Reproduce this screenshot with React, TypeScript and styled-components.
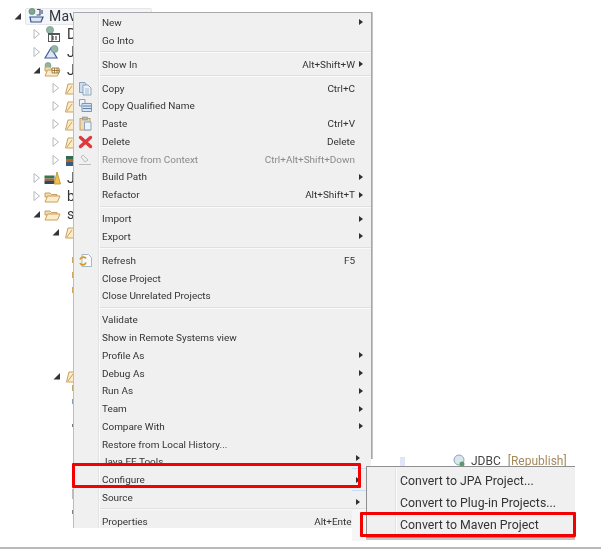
import React from "react";
import styled, { createGlobalStyle } from "styled-components";

const Global = createGlobalStyle`
  html, body { margin: 0; padding: 0; background: #fff; }
  body { font-family: Roboto, "Liberation Sans", sans-serif; }
`;

const Page = styled.div`
  position: relative;
  width: 601px;
  height: 549px;
  overflow: hidden;
  background: #fff;
  box-sizing: border-box;
  border-bottom: 2px solid #b9b9b9;
  filter: blur(0.3px);
`;

/* ---------- Tree behind the menu ---------- */
const Tree = styled.div`
  display: flex;
  flex-direction: column;
  padding-top: 7px;
`;
const TreeRow = styled.div<{ $level: number }>`
  display: flex;
  align-items: center;
  height: 18px;
  padding-left: ${(p) => 13 + p.$level * 19}px;
  color: #333;
`;
const RootLabel = styled.div`
  display: flex;
  align-items: center;
  height: 17px;
  width: 127px;
  margin-left: 2px;
  box-sizing: border-box;
  background: #f2f6fc;
  border: 1px solid #e6e6e6;
  border-radius: 2px;
`;
const TreeText = styled.span<{ $root?: boolean }>`
  margin-left: ${(p) => (p.$root ? 4 : 6)}px;
  font-size: 14px;
  letter-spacing: 0.3px;
  white-space: nowrap;
`;
const Slivers = styled.div`
  display: flex;
  flex-direction: column;
  align-items: flex-start;
  padding-left: 71.5px;
`;
const Sliver = styled.div<{ $gap: number; $h: number; $c: string }>`
  width: 2px;
  height: ${(p) => p.$h}px;
  margin-top: ${(p) => p.$gap}px;
  background: ${(p) => p.$c};
`;
const SliverIcon = styled.div`
  display: flex;
  align-items: center;
  margin-left: -20px;
  height: 14px;
`;

const Caret = ({ open }: { open: boolean }) => (
  <svg width="10" height="12" viewBox="0 0 10 12" style={{ flex: "none" }}>
    {open ? (
      <path d="M8 3 V9.5 H1.5 Z" fill="#333" />
    ) : (
      <path d="M2 1.5 L7.5 6 L2 10.5 Z" fill="#fff" stroke="#b4b8bc" strokeWidth="1" />
    )}
  </svg>
);

const Folder = () => (
  <g>
    <path d="M1 5 H6 L7.5 6.5 H13 V9 H1 Z" fill="#f4dcae" stroke="#c9a060" strokeWidth="1" />
    <path d="M1 14 L3.5 8 H16 L13.5 14 Z" fill="#fbeccb" stroke="#c9a060" strokeWidth="1" />
  </g>
);

const TreeIcon = ({ kind }: { kind: string }) => {
  return (
    <svg width="17" height="16" viewBox="0 0 17 16" style={{ flex: "none", marginLeft: 2 }}>
      {kind === "maven" && (
        <g>
          <circle cx="4" cy="3.5" r="3" fill="#7fa88f" stroke="#5b7a6a" strokeWidth="0.7" />
          <path d="M2 9 H15 L13 14 H3 Z" fill="#dce6f3" stroke="#33508c" strokeWidth="1.2" />
          <path d="M9 1.5 H12 V7 H8.5 M14 2 V6" fill="none" stroke="#3f4f7f" strokeWidth="1.2" />
        </g>
      )}
      {kind === "version" && (
        <g>
          <circle cx="6" cy="4" r="3.6" fill="#8fb7a4" stroke="#6b917f" strokeWidth="0.6" />
          <rect x="4.5" y="7.5" width="11" height="8" fill="#fff" stroke="#555" strokeWidth="1" />
          <rect x="4.5" y="7.5" width="11" height="1.5" fill="#555" />
          <path d="M7 10 H9 V14 M7 12 H9 M7 14 H9 M12 10 V14" fill="none" stroke="#222" strokeWidth="1" />
        </g>
      )}
      {kind === "jax" && (
        <g>
          <path d="M1 14 L7 4 L13 14 Z" fill="#dfe7f6" stroke="#3f5aa0" strokeWidth="1.2" />
          <circle cx="10.5" cy="5" r="3.6" fill="#93b7a6" stroke="#6b917f" strokeWidth="0.6" />
        </g>
      )}
      {kind === "openpkg" && (
        <g>
          <circle cx="4" cy="3.5" r="3" fill="#8fb7a4" stroke="#6b917f" strokeWidth="0.6" />
          <Folder />
          <path d="M8 6 H15 V11 H8 Z M10.5 6 V11 M13 6 V11 M8 8.5 H15" fill="#fff3d8" stroke="#8a6a30" strokeWidth="0.8" />
        </g>
      )}
      {kind === "pkgclip" && (
        <g>
          <path d="M2.5 14 L5 4 H14 V14 Z" fill="#fbeccb" stroke="#c9a060" strokeWidth="1" />
          <path d="M4 13 L9 6" stroke="#d2a050" strokeWidth="1" />
        </g>
      )}
      {kind === "libclip" && (
        <g>
          <rect x="3" y="4" width="10" height="3" fill="#2f6b4f" />
          <rect x="3" y="7" width="10" height="3" fill="#b06a30" />
          <rect x="3" y="10" width="10" height="4" fill="#3c5a7a" />
        </g>
      )}
      {kind === "books" && (
        <g>
          <rect x="0.5" y="5.5" width="10" height="3" fill="#2f7a55" />
          <rect x="0.5" y="8.5" width="10" height="2.5" fill="#a9663c" />
          <rect x="0.5" y="11" width="10" height="3" fill="#2c4a68" />
          <path d="M10 14 L13 2 L16.5 14 Z" fill="#f3c04d" stroke="#bd8a2b" strokeWidth="0.8" />
        </g>
      )}
      {kind === "folder" && <Folder />}
    </svg>
  );
};

/* ---------- Context menu ---------- */
const Menu = styled.div`
  position: absolute;
  left: 73px;
  top: 12px;
  width: 298px;
  height: 516px;
  box-sizing: border-box;
  padding-top: 0.6px;
  overflow: hidden;
  color: #333;
  background: linear-gradient(
    to right,
    transparent 24px,
    #e3e3e3 24px,
    #e3e3e3 25px,
    #fbfbfb 25px,
    #fbfbfb 26px,
    transparent 26px
  ), #f0f0f0;
  border-top: 1px solid #a9a9a9;
  border-left: 1.5px solid #bdbdbd;
`;
const RightEdge = styled.div`
  position: absolute;
  left: 370px;
  top: 12px;
  width: 3px;
  height: 447px;
  background: linear-gradient(to right, #9d9d9d, #a8a8a8 60%, #d8d8d8);
`;
const Row = styled.div<{ $off?: boolean }>`
  display: grid;
  grid-template-columns: 25px 1fr auto 16px;
  align-items: center;
  height: 17.75px;
  font-size: 9.95px;
  white-space: nowrap;
  color: ${(p) => (p.$off ? "#8a8a8a" : "#333")};
`;
const IconCell = styled.div`
  display: flex;
  justify-content: center;
  align-items: center;
  padding-right: 2px;
`;
const Label = styled.span`
  padding-left: 3px;
`;
const Shortcut = styled.span`
  text-align: right;
`;
const Arrow = styled.div<{ $x: number; $y: number }>`
  justify-self: start;
  margin-left: ${(p) => p.$x}px;
  transform: translateY(${(p) => p.$y}px);
  width: 0;
  height: 0;
  border-top: 3.5px solid transparent;
  border-bottom: 3.5px solid transparent;
  border-left: 4px solid #2f2f2f;
`;
const Separator = styled.div`
  height: 6.25px;
  display: flex;
  flex-direction: column;
  justify-content: center;
  margin-left: 26px;
  &::before {
    content: "";
    height: 1px;
    background: #e0e0e0;
  }
  &::after {
    content: "";
    height: 1px;
    background: #fafafa;
  }
`;

/* ---------- Submenu ---------- */
const Patch = styled.div`
  position: absolute;
  left: 352px;
  top: 509px;
  width: 16px;
  height: 32px;
  background: #f6f6f6;
`;
const HoverMark = styled.div<{ $top: number }>`
  position: absolute;
  left: 352px;
  top: ${(p) => p.$top}px;
  width: 14px;
  height: 1px;
  background: #c9dcf5;
`;
const Submenu = styled.div`
  position: absolute;
  left: 366px;
  top: 466px;
  width: 209px;
  height: 72px;
  box-sizing: border-box;
  padding-top: 2px;
  display: flex;
  flex-direction: column;
  justify-content: center;
  color: #333;
  background: linear-gradient(
    to right,
    transparent 28px,
    #e3e3e3 28px,
    #e3e3e3 29px,
    #fbfbfb 29px,
    #fbfbfb 30px,
    transparent 30px
  ), #f0f0f0;
  border-top: 1px solid #8f8f8f;
  border-left: 1px solid #8f8f8f;
  border-bottom: 1px solid #8f8f8f;
  box-shadow: 0 2px 0 #c4c4c4;
`;
const SubRow = styled.div`
  height: 22.3px;
  display: flex;
  align-items: center;
  padding-left: 33px;
  font-size: 12.3px;
  letter-spacing: 0.03px;
  white-space: nowrap;
`;
const RedBox = styled.div<{ $l: number; $t: number; $w: number; $h: number }>`
  position: absolute;
  left: ${(p) => p.$l}px;
  top: ${(p) => p.$t}px;
  width: ${(p) => p.$w}px;
  height: ${(p) => p.$h}px;
  box-sizing: border-box;
  border: 3px solid #f40000;
  border-radius: 1px;
`;

/* ---------- Server view fragment ---------- */
const ServerEntry = styled.div`
  position: absolute;
  left: 452px;
  top: 453px;
  display: flex;
  align-items: center;
  gap: 5px;
  height: 15px;
  font-size: 12px;
  color: #444;
  white-space: nowrap;
`;
const Republish = styled.span`
  color: #a58a5c;
  margin-left: 2px;
`;
const PaleStrip = styled.div`
  position: absolute;
  left: 400px;
  top: 457px;
  width: 5px;
  height: 9px;
  background: #dfe6f6;
`;

const MenuIcon = ({ kind }: { kind: string }) => (
  <svg width="15" height="15" viewBox="0 0 15 15">
    {kind === "copy" && (
      <g>
        <path d="M1.5 1.5 H7 L8 3 V11.5 H1.5 Z" fill="#cfdcec" stroke="#8ba3bd" />
        <path d="M5 4 H10 L13 7 V14 H5 Z" fill="#eef3f9" stroke="#8ba3bd" />
        <path d="M7 8 H11 M7 10 H11 M7 12 H11" stroke="#a4b8cd" />
      </g>
    )}
    {kind === "copyq" && (
      <g>
        <path d="M1.5 1.5 H7 V8 H1.5 Z" fill="#eef3f9" stroke="#8ba3bd" />
        <path d="M4 5.5 H13.5 V13.5 H4 Z" fill="#d6e3f1" stroke="#7c97b6" />
        <path d="M5 8 H13 M5 10.5 H13" stroke="#5f83ad" />
      </g>
    )}
    {kind === "paste" && (
      <g>
        <rect x="2" y="2.5" width="10" height="11.5" fill="#efd9ae" stroke="#bd9f6e" />
        <rect x="4.5" y="1" width="5" height="3" fill="#a9b4bf" stroke="#8a96a2" strokeWidth="0.6" />
        <path d="M6.5 6 H13 V14 H6.5 Z" fill="#eef3f9" stroke="#8ba3bd" />
      </g>
    )}
    {kind === "delete" && (
      <path d="M2.5 3.5 L12.5 12.5 M12.5 3.5 L2.5 12.5" stroke="#de3a3e" strokeWidth="3.4" strokeLinecap="round" />
    )}
    {kind === "remove" && (
      <g fill="none" stroke="#bcbcbc">
        <path d="M5 3 L10 8 L7 10 L3 5 Z" />
        <path d="M1 12.5 H13" />
      </g>
    )}
    {kind === "refresh" && (
      <g>
        <path d="M4 1.5 H10.5 L13.5 4.5 V13.5 H4 Z" fill="#f8fafc" stroke="#a9b7c6" />
        <path d="M2 6.5 C3 3.5 7 3.5 8 5.5 M8 9.5 C7 12.5 3 12.5 2 10" fill="none" stroke="#d99a1c" strokeWidth="1.7" />
      </g>
    )}
  </svg>
);

type Item = {
  t?: string;
  s?: string;
  a?: [number, number];
  i?: string;
  off?: boolean;
};
const A: [number, number] = [4, 0];
const menuItems: (Item | "sep")[] = [
  { t: "New", a: A },
  { t: "Go Into" },
  "sep",
  { t: "Show In", s: "Alt+Shift+W", a: A },
  "sep",
  { t: "Copy", s: "Ctrl+C", i: "copy" },
  { t: "Copy Qualified Name", i: "copyq" },
  { t: "Paste", s: "Ctrl+V", i: "paste" },
  { t: "Delete", s: "Delete", i: "delete" },
  { t: "Remove from Context", s: "Ctrl+Alt+Shift+Down", i: "remove", off: true },
  { t: "Build Path", a: A },
  { t: "Refactor", s: "Alt+Shift+T", a: A },
  "sep",
  { t: "Import", a: A },
  { t: "Export", a: A },
  "sep",
  { t: "Refresh", s: "F5", i: "refresh" },
  { t: "Close Project" },
  { t: "Close Unrelated Projects" },
  "sep",
  { t: "Validate" },
  { t: "Show in Remote Systems view" },
  { t: "Profile As", a: A },
  { t: "Debug As", a: A },
  { t: "Run As", a: A },
  { t: "Team", a: A },
  { t: "Compare With", a: A },
  { t: "Restore from Local History..." },
  { t: "Java EE Tools", a: [1, -4] },
  { t: "Configure", a: [1, 0] },
  { t: "Source", a: [1, 5] },
  "sep",
  { t: "Properties", s: "Alt+Enter" },
];

const treeRows: { level: number; open?: boolean; icon: string; text?: string }[] = [
  { level: 1, icon: "version", text: "D" },
  { level: 1, icon: "jax", text: "J-" },
  { level: 1, open: true, icon: "openpkg", text: "J" },
  { level: 2, icon: "pkgclip" },
  { level: 2, icon: "pkgclip" },
  { level: 2, icon: "pkgclip" },
  { level: 2, icon: "pkgclip" },
  { level: 2, icon: "libclip" },
  { level: 1, icon: "books", text: "J" },
  { level: 1, icon: "folder", text: "b" },
  { level: 1, open: true, icon: "folder", text: "s" },
  { level: 2, open: true, icon: "pkgclip" },
];

const slivers = [
  { gap: 16, h: 6, c: "#d3a565" },
  { gap: 9, h: 6, c: "#d3a565" },
  { gap: 9, h: 6, c: "#d3a565" },
];
const slivers2 = [
  { gap: 2, h: 6, c: "#c9a26c" },
  { gap: 8, h: 5, c: "#8c9cb4" },
  { gap: 20, h: 3, c: "#777" },
  { gap: 62, h: 10, c: "#bbb" },
  { gap: 11, h: 4, c: "#7c7c90" },
];

export default function App() {
  return (
    <>
      <Global />
      <Page>
        <Tree>
          <TreeRow $level={0}>
            <Caret open />
            <RootLabel>
              <TreeIcon kind="maven" />
              <TreeText $root>Maven</TreeText>
            </RootLabel>
          </TreeRow>
          {treeRows.map((r, i) => (
            <TreeRow key={i} $level={r.level}>
              <Caret open={!!r.open} />
              <TreeIcon kind={r.icon} />
              {r.text && <TreeText>{r.text}</TreeText>}
            </TreeRow>
          ))}
          <Slivers>
            {slivers.map((s, i) => (
              <Sliver key={i} $gap={s.gap} $h={s.h} $c={s.c} />
            ))}
            <Sliver $gap={76} $h={0} $c="transparent" />
            <SliverIcon>
              <Caret open />
              <TreeIcon kind="pkgclip" />
            </SliverIcon>
            {slivers2.map((s, i) => (
              <Sliver key={i} $gap={s.gap} $h={s.h} $c={s.c} />
            ))}
          </Slivers>
        </Tree>

        <PaleStrip />
        <ServerEntry>
          <svg width="14" height="14" viewBox="0 0 14 14">
            <circle cx="7" cy="6" r="5" fill="#d9e6ee" stroke="#8aa7b8" />
            <circle cx="10" cy="10" r="2.5" fill="#5d9a6a" />
          </svg>
          <span>JDBC</span>
          <Republish>[Republish]</Republish>
        </ServerEntry>

        <RightEdge />
        <Menu>
          {menuItems.map((m, i) =>
            m === "sep" ? (
              <Separator key={i} />
            ) : (
              <Row key={i} $off={m.off}>
                <IconCell>{m.i && <MenuIcon kind={m.i} />}</IconCell>
                <Label>{m.t}</Label>
                <Shortcut>{m.s}</Shortcut>
                {m.a ? <Arrow $x={m.a[0]} $y={m.a[1]} /> : <span />}
              </Row>
            )
          )}
        </Menu>

        <HoverMark $top={468} />
        <HoverMark $top={490} />
        <Patch />
        <Submenu>
          <SubRow>Convert to JPA Project...</SubRow>
          <SubRow>Convert to Plug-in Projects...</SubRow>
          <SubRow>Convert to Maven Project</SubRow>
        </Submenu>

        <RedBox $l={72} $t={463} $w={289} $h={25} />
        <RedBox $l={360} $t={512} $w={216} $h={25} />
      </Page>
    </>
  );
}
